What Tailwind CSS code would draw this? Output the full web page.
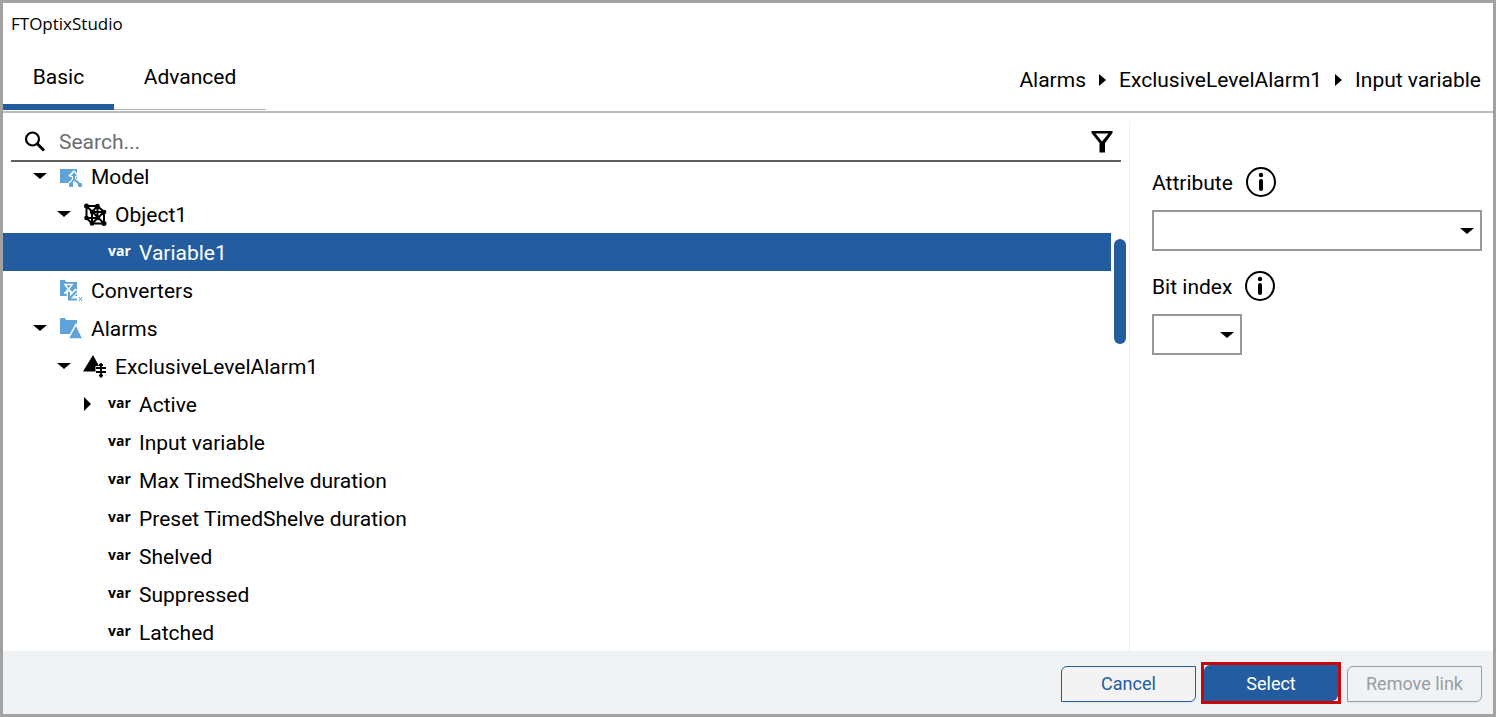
<!DOCTYPE html>
<html lang="en">
<head>
    <meta charset="UTF-8">
    <meta name="viewport" content="width=device-width, initial-scale=1.0">
    <title>FTOptixStudio</title>
    <script src="https://cdn.jsdelivr.net/npm/@tailwindcss/browser@4"></script>
</head>
<body class="flex flex-col h-screen border-3 border-[#a2a2a2] bg-white text-black text-[21px] leading-6 font-[Roboto,sans-serif]">
    <!-- Title bar -->
    <h1 class="px-2 pt-2 text-[17px] leading-[26px] font-[Open_Sans,sans-serif]">FTOptixStudio</h1>

    <!-- Tabs and breadcrumb -->
    <header class="flex items-end justify-between h-[76px] shrink-0 border-b-2 border-[#b9bbbd]">
        <nav class="flex h-[50px]">
            <button class="w-[111px] pb-3 mb-px border-b-6 border-[#235d9f]">Basic</button>
            <button class="w-[152px] pb-4 mb-px border-b border-[#b4b6b8]">Advanced</button>
        </nav>
        <nav class="flex items-center gap-[13px] pr-3 pb-[19px]">
            <a href="#">Alarms</a>
            <svg class="w-[7px] h-3" viewBox="0 0 7 12"><path d="M0 0L7 6L0 12Z"/></svg>
            <a href="#">ExclusiveLevelAlarm1</a>
            <svg class="w-[7px] h-3" viewBox="0 0 7 12"><path d="M0 0L7 6L0 12Z"/></svg>
            <a href="#">Input variable</a>
        </nav>
    </header>

    <main class="flex flex-1 min-h-0">
        <section class="flex flex-col flex-1 min-w-0">
            <!-- Search -->
            <div class="flex items-center h-[49px] shrink-0 pt-[10px] ml-2 mr-2 border-b-2 border-[#5c6064]">
                <svg class="w-6 h-6 ml-3" viewBox="0 0 24 24" fill="none" stroke="black"><circle cx="9.500" cy="9" r="6.500" stroke-width="2.200"/><path d="M14 13.500L21 20.500" stroke-width="3"/></svg>
                <input type="text" aria-label="Search" placeholder="Search..." class="flex-1 ml-3 outline-none placeholder:text-[#6b6e72]">
                <button aria-label="Filter" class="mr-2">
                    <svg class="w-[22px] h-[22px]" viewBox="0 0 22 22"><path fill-rule="evenodd" d="M0.500 0H21.500V2L14 12V21.500H8.500V12L0.500 2ZM4.500 2.500L11 10.500L17.500 2.500Z"/></svg>
                </button>
            </div>

            <!-- Tree -->
            <div class="flex flex-1 min-h-0 overflow-hidden">
                <ul class="flex-1 -mt-[5px] *:flex *:items-center *:h-[38px] *:pt-0.5">
                    <li class="pl-[30px]">
                        <svg class="w-[14px] h-[6px] mr-3 mb-0.5" viewBox="0 0 14 6"><path d="M0 0H14L7 6Z"/></svg>
                        <svg class="w-6 h-6 mr-2" viewBox="0 0 24 24"><path fill="#5fa3d9" d="M1 4H18V18H1Z"/><path d="M15 12V15L10 20M15 14L21 20" fill="none" stroke="white" stroke-width="4"/><path d="M15 5L20 11L15 13L9 11Z" fill="white"/><path d="M15 9V14.500L11.500 19M15 14L21 19.500" fill="none" stroke="#5fa3d9" stroke-width="2"/><path fill="#5fa3d9" d="M10 18H14V22H10ZM15 7L18 11H12Z"/><circle cx="21" cy="20" r="2.200" fill="#5fa3d9"/></svg>
                        Model
                    </li>
                    <li class="pl-[54px]">
                        <svg class="w-[14px] h-[6px] mr-3 mb-0.5" viewBox="0 0 14 6"><path d="M0 0H14L7 6Z"/></svg>
                        <svg class="w-6 h-6 mr-2" viewBox="0 0 24 24"><path d="M3.500 3H14.500L21 9V20.500H9L3.500 15ZM9 9H21M9 9V20.500M14.500 3V15H3.500M3.500 3L21 20.500M14.500 3L9 9M9 20.500L21 9" fill="none" stroke="black" stroke-width="2"/><circle cx="3.500" cy="3" r="2.500"/><circle cx="14.500" cy="3" r="2.300"/><circle cx="21" cy="9" r="2.300"/><circle cx="9" cy="9" r="2.200"/><circle cx="15" cy="15" r="2.200"/><circle cx="3.500" cy="15" r="2.300"/><circle cx="9" cy="20.500" r="2.300"/><circle cx="21" cy="20.500" r="2.500"/></svg>
                        Object1
                    </li>
                    <li class="pl-[105px] bg-[#235d9f] text-white"><span class="w-[31px] pb-1 text-[14px] font-bold font-[Open_Sans,sans-serif]">var</span>Variable1</li>
                    <li class="pl-14">
                        <svg class="w-6 h-6 mr-2" viewBox="0 0 24 24"><path fill="#5fa3d9" d="M1 2Q1 1 2 1H6L7 3H18V17H1Z"/><path d="M5 5.500H14M5 14H12M6.500 6C7 9.500 12 10.500 12.500 14M12.500 6C12 9.500 7 10.500 6.500 14" fill="none" stroke="white" stroke-width="1.500"/><path d="M10 12V20H19M10 20L18 11" fill="none" stroke="white" stroke-width="4.500"/><path d="M10 13V20.500H18M10 20L17.500 12" fill="none" stroke="#5fa3d9" stroke-width="2"/><path d="M20 18L23 22M23 18L20 22" stroke="#5fa3d9"/></svg>
                        Converters
                    </li>
                    <li class="pl-[30px]">
                        <svg class="w-[14px] h-[6px] mr-3 mb-0.5" viewBox="0 0 14 6"><path d="M0 0H14L7 6Z"/></svg>
                        <svg class="w-6 h-6 mr-2" viewBox="0 0 24 24"><path fill="#5fa3d9" d="M1 2Q1 1 2 1H6L7 3H18V17H1Z"/><path fill="#5fa3d9" stroke="white" stroke-width="1.500" d="M17 7.500L24 22H9Z"/></svg>
                        Alarms
                    </li>
                    <li class="pl-[54px]">
                        <svg class="w-[14px] h-[6px] mr-3 mb-0.5" viewBox="0 0 14 6"><path d="M0 0H14L7 6Z"/></svg>
                        <svg class="w-6 h-6 mr-2" viewBox="0 0 24 24"><path d="M10 0L19 16.500H0Z"/><path d="M18 7V23M12.500 13H23.500M12.500 17H23.500" stroke="white" stroke-width="4"/><path d="M18 8V22.500M13 13H23M13 17H23M16 10H20M16 20.500H20" stroke="black" stroke-width="1.800"/></svg>
                        ExclusiveLevelAlarm1
                    </li>
                    <li class="pl-[81px]">
                        <svg class="w-[7px] h-[14px] mr-[17px] mb-0.5" viewBox="0 0 7 14"><path d="M0 0L7 7L0 14Z"/></svg>
                        <span class="w-[31px] pb-1 text-[14px] font-bold font-[Open_Sans,sans-serif]">var</span>Active
                    </li>
                    <li class="pl-[105px]"><span class="w-[31px] pb-1 text-[14px] font-bold font-[Open_Sans,sans-serif]">var</span>Input variable</li>
                    <li class="pl-[105px]"><span class="w-[31px] pb-1 text-[14px] font-bold font-[Open_Sans,sans-serif]">var</span>Max TimedShelve duration</li>
                    <li class="pl-[105px]"><span class="w-[31px] pb-1 text-[14px] font-bold font-[Open_Sans,sans-serif]">var</span>Preset TimedShelve duration</li>
                    <li class="pl-[105px]"><span class="w-[31px] pb-1 text-[14px] font-bold font-[Open_Sans,sans-serif]">var</span>Shelved</li>
                    <li class="pl-[105px]"><span class="w-[31px] pb-1 text-[14px] font-bold font-[Open_Sans,sans-serif]">var</span>Suppressed</li>
                    <li class="pl-[105px]"><span class="w-[31px] pb-1 text-[14px] font-bold font-[Open_Sans,sans-serif]">var</span>Latched</li>
                </ul>
                <!-- Scrollbar -->
                <div class="w-[18px] px-[3px] pt-[77px]">
                    <div class="h-[105px] rounded-full bg-[#235d9f]"></div>
                </div>
            </div>
        </section>

        <!-- Attribute panel -->
        <aside class="w-[364px] mt-2 pt-[46px] pl-[22px] pr-[11px] border-l border-[#f0f0f0]">
            <div class="flex items-center gap-[13px] h-[30px]">
                <label for="attribute" class="pt-0.5">Attribute</label>
                <button aria-label="About attribute">
                    <svg class="w-[30px] h-[30px]" viewBox="0 0 30 30"><circle cx="15" cy="15" r="14" fill="none" stroke="black" stroke-width="2"/><circle cx="15" cy="8" r="2.200"/><path d="M15 14V22" stroke="black" stroke-width="4" stroke-linecap="round"/></svg>
                </button>
            </div>
            <div class="relative mt-[13px]">
                <select id="attribute" class="block appearance-none w-full h-[41px] border-2 border-[#97999d]"></select>
                <svg class="absolute right-2 top-[18px] w-[14px] h-[6px] pointer-events-none" viewBox="0 0 14 6"><path d="M0 0H14L7 6Z"/></svg>
            </div>
            <div class="flex items-center gap-[13px] h-[30px] mt-5">
                <label for="bitIndex" class="pt-0.5">Bit index</label>
                <button aria-label="About bit index">
                    <svg class="w-[30px] h-[30px]" viewBox="0 0 30 30"><circle cx="15" cy="15" r="14" fill="none" stroke="black" stroke-width="2"/><circle cx="15" cy="8" r="2.200"/><path d="M15 14V22" stroke="black" stroke-width="4" stroke-linecap="round"/></svg>
                </button>
            </div>
            <div class="relative w-[90px] mt-[13px]">
                <select id="bitIndex" class="block appearance-none w-full h-[41px] border-2 border-[#97999d]"></select>
                <svg class="absolute right-2 top-[18px] w-[14px] h-[6px] pointer-events-none" viewBox="0 0 14 6"><path d="M0 0H14L7 6Z"/></svg>
            </div>
        </aside>
    </main>

    <!-- Footer buttons -->
    <footer class="flex items-center justify-end h-[63px] shrink-0 pr-[11px] bg-[#eff3f6] text-[18px]">
        <button class="w-[135px] h-9 mt-0.5 border border-[#235d9f] rounded-tl-md rounded-br-md bg-[#f3f3f3] text-[#235d9f] shadow-xs">Cancel</button>
        <div class="ml-[5px] mr-[6px] border-3 border-[#cc0509] bg-white">
            <button class="block w-[134px] h-9 pt-0.5 rounded-tl-md rounded-br-md bg-[#235d9f] text-white">Select</button>
        </div>
        <button disabled class="w-[135px] h-9 mt-0.5 border border-[#9a9da1] rounded-tl-md rounded-br-md text-[#9a9da1] shadow-xs">Remove link</button>
    </footer>
</body>
</html>
